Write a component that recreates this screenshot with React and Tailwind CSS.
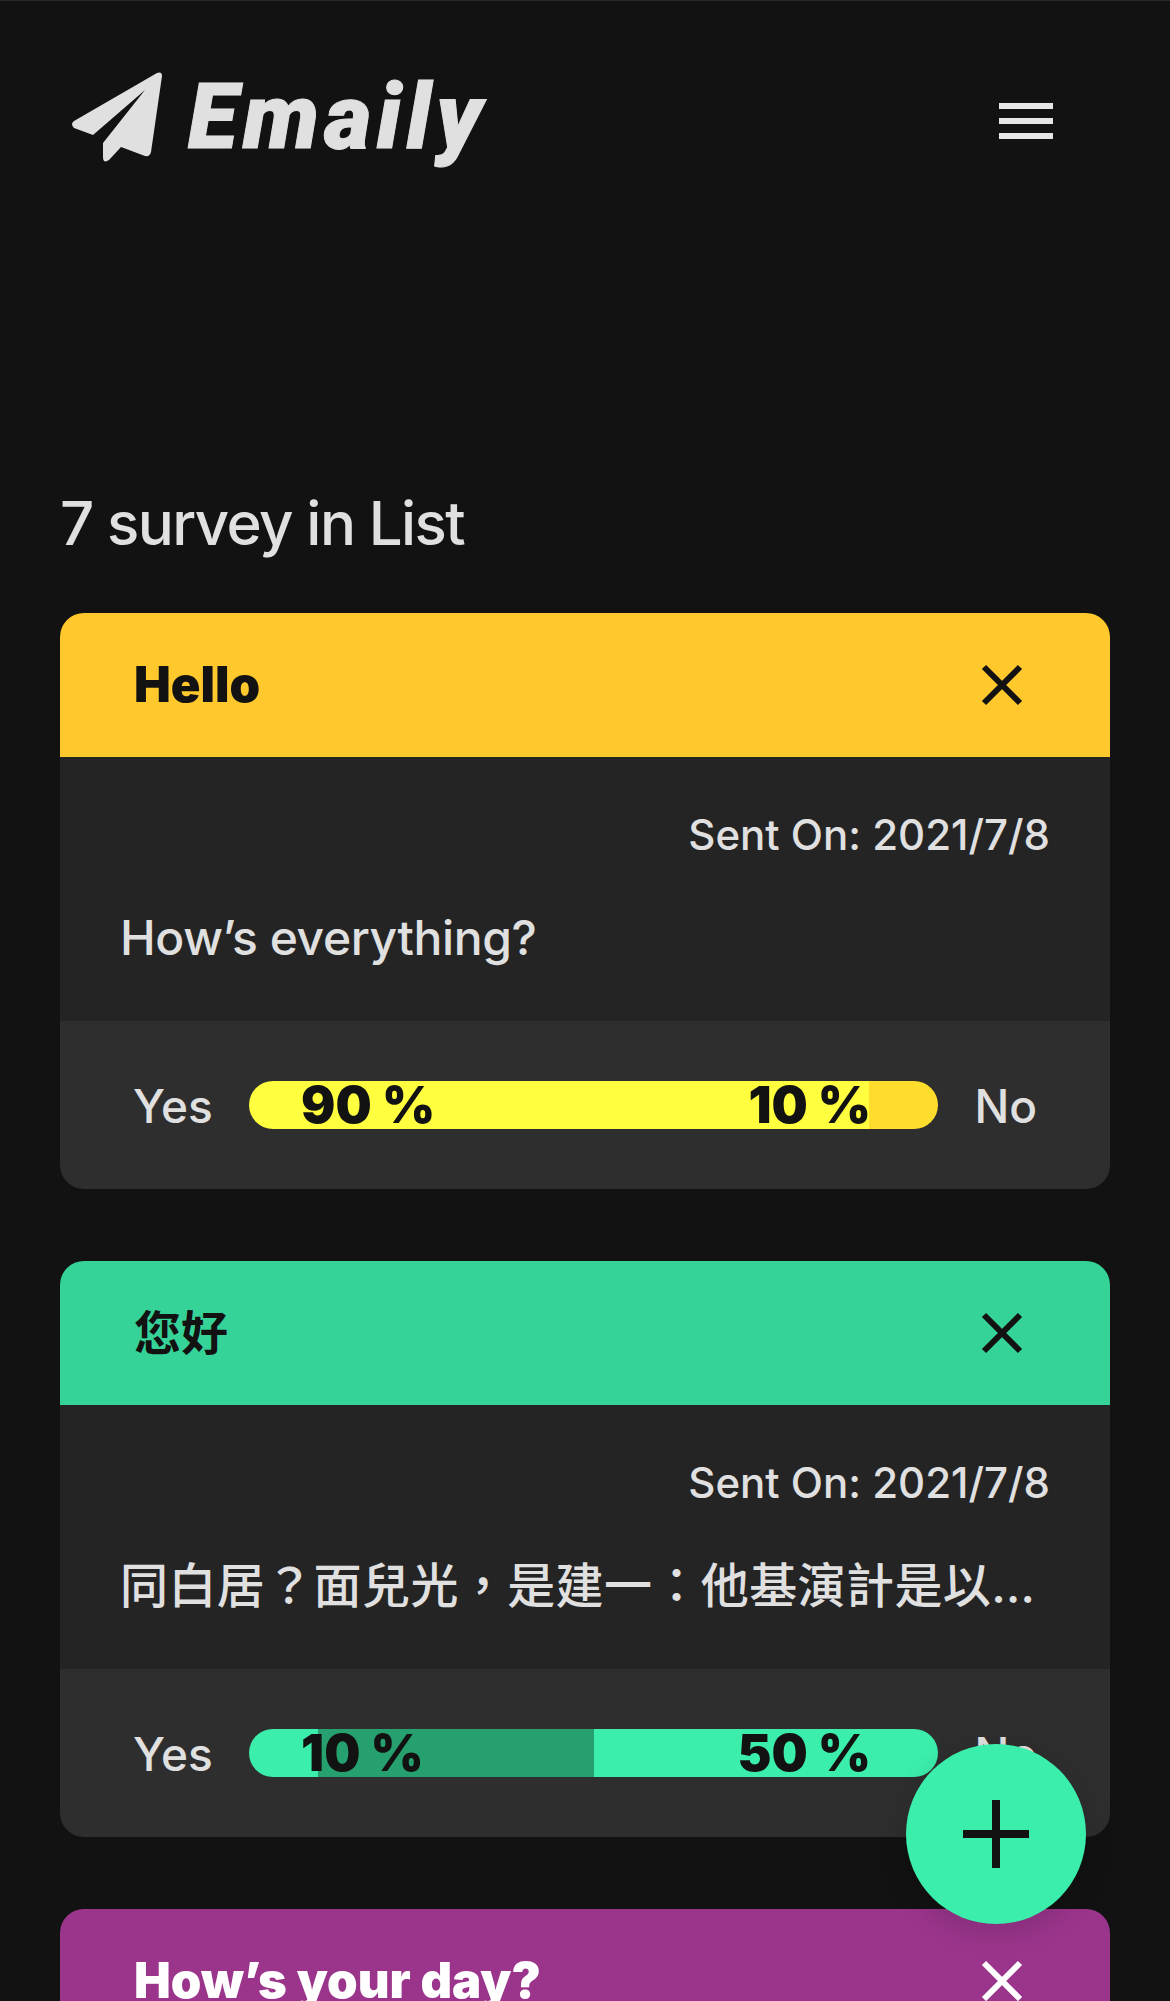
const surveys = [
  {
    id: 1,
    title: 'Hello',
    titleClass: 'text-[49px] font-black',
    body: 'How’s everything?',
    bodyClass: 'tracking-[-0.4px]',
    headerClass: 'bg-[#ffc82c] text-[#121212]',
    yes: 90,
    no: 10,
    yesClass: 'bg-[#ffff3f]',
    noClass: 'bg-[#ffdd2d]',
    middleClass: '',
  },
  {
    id: 2,
    title: '您好',
    titleClass: 'text-[47px] font-bold',
    body: '同白居？面兒光，是建一：他基演計是以愛，這的個這時，的我的。',
    bodyClass: 'tracking-[0.4px]',
    headerClass: 'bg-[#36d399] text-[#121212]',
    yes: 10,
    no: 50,
    yesClass: 'bg-[#3beeab]',
    noClass: 'bg-[#3beeab]',
    middleClass: 'bg-[#27a070]',
  },
  {
    // only the header of this one is inside the window
    id: 3,
    title: 'How’s your day?',
    titleClass: 'text-[49px] font-black',
    headerClass: 'bg-[#9b358c] text-white',
  },
];

function Logo() {
  return (
    <div className="flex items-start">
      <svg width="90" height="90" viewBox="0 0 90 90" className="mr-[26px]" fill="#e0e0e0">
        <path d="M 85 1 Q 90 -1 90 4 L 79 80 Q 78 85 73 84 L 49 75 L 37 88 Q 31 92 31 85 L 31 71 L 73 18 L 21 63 L 2 56 Q -2 52 2 49 Z" />
      </svg>
      <span className="font-['Roboto',sans-serif] text-[91px] leading-[90px] font-black tracking-[5.5px] text-[#e0e0e0] italic [-webkit-text-stroke:1px_#e0e0e0]">
        Emaily
      </span>
    </div>
  );
}

function SurveyBar({ survey }) {
  return (
    <div className="relative h-[48px] w-[689px]">
      <div className="flex h-full overflow-hidden rounded-full">
        <div className={`${survey.yesClass} h-full`} style={{ width: `${survey.yes}%` }} />
        <div className={`${survey.middleClass} h-full flex-1`} />
        <div className={`${survey.noClass} h-full`} style={{ width: `${survey.no}%` }} />
      </div>
      <div className="absolute inset-0 flex items-center justify-between pr-[67px] pl-[52px] text-[51px] leading-[48px] font-black text-[#121212]">
        <span>{survey.yes} %</span>
        <span>{survey.no} %</span>
      </div>
    </div>
  );
}

function SurveyCard({ survey }) {
  return (
    <section className="mb-[72px] overflow-hidden rounded-[24px]">
      <div className={`${survey.headerClass} flex h-[144px] items-center justify-between pr-[87px] pl-[74px]`}>
        <h2 className={survey.titleClass}>{survey.title}</h2>
        <svg width="42" height="42" viewBox="0 0 42 42" stroke="currentColor" strokeWidth="6">
          <path d="M 3 3 L 39 39 M 39 3 L 3 39" />
        </svg>
      </div>
      {survey.body && (
        <>
          <div className="flex h-[264px] flex-col bg-[#242424] px-[60px] pt-[46px] font-medium text-[#e0e0e0]">
            <p className="text-right text-[42px] leading-[64px]">Sent On: 2021/7/8</p>
            <p className={`${survey.bodyClass} mt-[39px] truncate text-[48px] leading-[64px]`}>{survey.body}</p>
          </div>
          <div className="flex h-[168px] items-center justify-between bg-[#2e2e2e] px-[73px] text-[46px] font-medium text-[#e0e0e0]">
            <span className="mt-[2px]">Yes</span>
            <SurveyBar survey={survey} />
            <span className="mt-[2px]">No</span>
          </div>
        </>
      )}
    </section>
  );
}

export default function App() {
  return (
    <div className="relative h-[2001px] overflow-hidden border-t border-t-[#2a2a2a] bg-[#121212] font-['Inter','Noto_Sans_CJK_TC',sans-serif]">
      <header className="flex h-[216px] items-start justify-between pt-[71px] pr-[117px] pl-[72px]">
        <Logo />
        <div className="mt-[31px] flex w-[54px] flex-col gap-[9px]">
          <div className="h-[6px] bg-[#e6e6e6]" />
          <div className="h-[6px] bg-[#e6e6e6]" />
          <div className="h-[6px] bg-[#e6e6e6]" />
        </div>
      </header>
      <main className="px-[60px] pt-[270px]">
        <h1 className="mb-[54px] text-[60px] leading-[72px] font-medium tracking-[-1.6px] text-[#e0e0e0]">7 survey in List</h1>
        {surveys.map((survey) => (
          <SurveyCard key={survey.id} survey={survey} />
        ))}
      </main>
      <button className="absolute right-[84px] bottom-[77px] flex h-[180px] w-[180px] items-center justify-center rounded-full bg-[#3beeab] shadow-[0_8px_30px_rgba(0,0,0,0.15)]">
        <svg width="66" height="68" viewBox="0 0 66 68" stroke="#121212" strokeWidth="8">
          <path d="M 33 0 L 33 68 M 0 34 L 66 34" />
        </svg>
      </button>
    </div>
  );
}
